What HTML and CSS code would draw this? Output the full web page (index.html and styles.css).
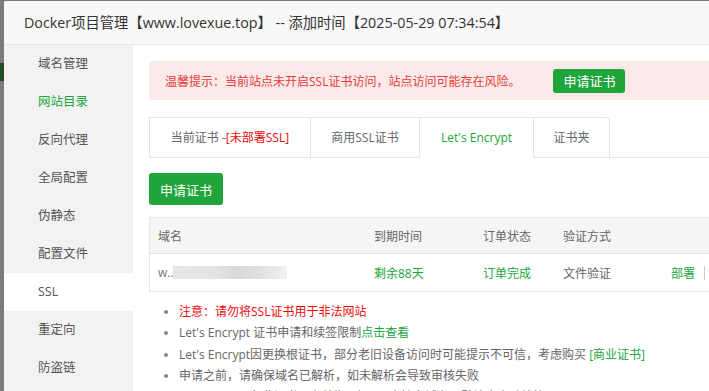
FILE: index.html
```html
<!DOCTYPE html>
<html lang="zh-CN">
<head>
<meta charset="utf-8">
<title>Docker项目管理</title>
<link rel="stylesheet" href="styles.css">
</head>
<body>
<div class="backdrop">
  <div class="behind">
    <span class="b-green"></span>
  </div>
  <div class="modal">
    <div class="modal-title">Docker项目管理【www.lovexue.top】 -- 添加时间【2025-05-29 07:34:54】</div>
    <div class="modal-body">
      <ul class="side">
        <li>域名管理</li>
        <li class="green">网站目录</li>
        <li>反向代理</li>
        <li>全局配置</li>
        <li>伪静态</li>
        <li>配置文件</li>
        <li class="active">SSL</li>
        <li>重定向</li>
        <li>防盗链</li>
      </ul>
      <div class="main">
        <div class="alert">
          <span>温馨提示：当前站点未开启SSL证书访问，站点访问可能存在风险。</span>
          <button class="btn btn-sm">申请证书</button>
        </div>
        <div class="tabs">
          <div class="tab t1">当前证书 -<span class="red">[未部署SSL]</span></div>
          <div class="tab t2">商用SSL证书</div>
          <div class="tab t3 on">Let's Encrypt</div>
          <div class="tab t4">证书夹</div>
          <div class="tab-rest"></div>
        </div>
        <button class="btn btn-md">申请证书</button>
        <div class="table">
          <div class="row head">
            <div class="c c1">域名</div>
            <div class="c c2">到期时间</div>
            <div class="c c3">订单状态</div>
            <div class="c c4">验证方式</div>
            <div class="c c5"></div>
          </div>
          <div class="row">
            <div class="c c1">w...<span class="blur"></span></div>
            <div class="c c2 green">剩余88天</div>
            <div class="c c3 green">订单完成</div>
            <div class="c c4">文件验证</div>
            <div class="c c5"><span class="green">部署</span><span class="sep"></span></div>
          </div>
        </div>
        <ul class="notes">
          <li class="red">注意：请勿将SSL证书用于非法网站</li>
          <li>Let's Encrypt 证书申请和续签限制<span class="green">点击查看</span></li>
          <li>Let's Encrypt因更换根证书，部分老旧设备访问时可能提示不可信，考虑购买 <span class="green">[商业证书]</span></li>
          <li>申请之前，请确保域名已解析，如未解析会导致审核失败</li>
          <li>Let's Encrypt免费证书，有效期3个月，支持多域名。默认会自动续签</li>
        </ul>
      </div>
    </div>
  </div>
</div>
</body>
</html>
```

FILE: styles.css
```css
* { box-sizing: border-box; }
html, body { margin: 0; padding: 0; }
body {
  width: 709px;
  height: 391px;
  overflow: hidden;
  font-family: "Open Sans", "Noto Sans CJK SC", sans-serif;
  color: #555;
}
.backdrop {
  display: flex;
  width: 709px;
  height: 391px;
  background: #7b7b7b;
  padding-top: 1px;
  overflow: hidden;
}
.behind {
  width: 4px;
  flex: none;
  position: relative;
}
.b-green {
  position: absolute;
  left: 0;
  top: 62px;
  width: 4px;
  height: 18px;
  background: #1f4f22;
}
.modal {
  flex: none;
  width: 760px;
  height: 390px;
  background: #fff;
  overflow: hidden;
  border-top-left-radius: 2px;
}
.modal-title {
  height: 44px;
  background: #f8f8f8;
  border-bottom: 1px solid #e6e6e6;
  padding-left: 20px;
  line-height: 43px;
  font-size: 14.3px;
  color: #333;
  white-space: nowrap;
}
.modal-body {
  display: flex;
}
.side {
  list-style: none;
  margin: 0;
  padding: 0;
  width: 129px;
  flex: none;
  background: #f2f2f2;
  height: 346px;
}
.side li {
  height: 38px;
  line-height: 38px;
  padding-left: 34px;
  font-size: 12.5px;
  color: #555;
}
.side li.green { color: #20a53a; }
.side li.active { background: #fff; }
.main {
  padding: 16px 0 0 16px;
  width: 620px;
  flex: none;
}
.alert {
  display: flex;
  align-items: center;
  height: 39px;
  background: #fae9e9;
  border-radius: 4px;
  padding-left: 16px;
  font-size: 12px;
  color: #e83b3b;
}
.btn {
  border: none;
  background: #20a53a;
  color: #fff;
  font-family: inherit;
  padding: 0;
  border-radius: 3px;
}
.btn-sm {
  margin-left: 33px;
  width: 72px;
  height: 24px;
  font-size: 13px;
}
.btn-md {
  display: block;
  margin-top: 15px;
  width: 74px;
  height: 32px;
  font-size: 13px;
}
.tabs {
  display: flex;
  margin-top: 17px;
  height: 41px;
}
.tab {
  height: 41px;
  border: 1px solid #e4e4e6;
  border-right: none;
  text-align: center;
  line-height: 39px;
  font-size: 12px;
  color: #666;
}
.tab.t1 { width: 161px; }
.tab.t2 { width: 109px; }
.tab.t3 { width: 114px; }
.tab.t4 { width: 77px; border-right: 1px solid #e4e4e6; border-top-right-radius: 4px; }
.tab.on { color: #20a53a; border-bottom-color: #fff; }
.tab-rest { flex: 1; border-bottom: 1px solid #e4e4e6; }
.red { color: #ef0808; }
.green { color: #20a53a; }
.table {
  margin-top: 12px;
  border: 1px solid #e6e6e6;
  border-right: none;
  font-size: 12px;
}
.row {
  display: flex;
  height: 37px;
  align-items: center;
}
.row.head {
  height: 36px;
  background: #f5f5f6;
  border-bottom: 1px solid #e6e6e6;
  color: #666;
}
.c { padding-left: 8px; white-space: nowrap; }
.c1 { width: 216px; color: #777; display: flex; align-items: center; }
.c2 { width: 109px; }
.c3 { width: 80px; }
.c4 { width: 108px; color: #666; }
.c5 { flex: 1; display: flex; align-items: center; }
.row.head .c1 { color: #666; }
.blur {
  display: inline-block;
  width: 114px;
  height: 13px;
  margin-left: -4px;
  background: linear-gradient(90deg, #e6e6e6 0, #e3e3e3 40%, #d8d8d8 55%, #e0e0e0 75%, #f0f0f0 100%);
}
.sep {
  display: inline-block;
  width: 1px;
  height: 14px;
  background: #ccc;
  margin-left: 9px;
}
.notes {
  margin: 9px 0 0;
  padding-left: 30px;
  font-size: 12px;
  line-height: 21.3px;
  color: #666;
}
.notes li { white-space: nowrap; }
.notes li::marker { color: #888; }
.notes li.red { color: #ef0808; }
```
